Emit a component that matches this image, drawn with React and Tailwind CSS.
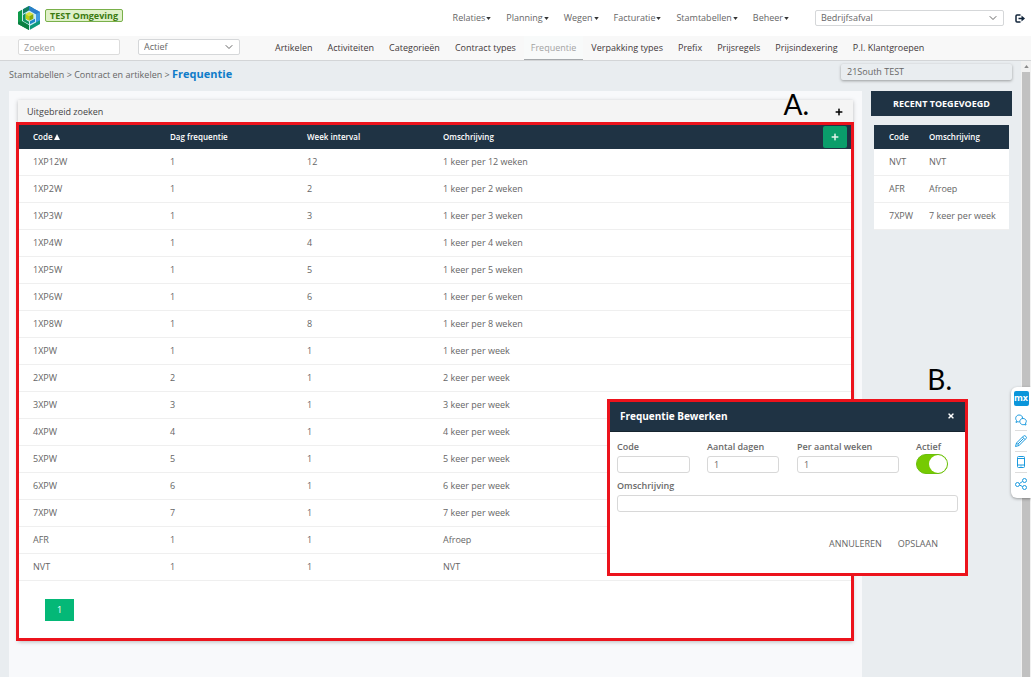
import React, { useState } from 'react';
import { ChevronDown } from 'lucide-react';
import { FaPlus, FaTimes } from 'react-icons/fa';

const mainMenu = ['Relaties', 'Planning', 'Wegen', 'Facturatie', 'Stamtabellen', 'Beheer'];

const subMenu = [
  'Artikelen',
  'Activiteiten',
  'Categorieën',
  'Contract types',
  'Frequentie',
  'Verpakking types',
  'Prefix',
  'Prijsregels',
  'Prijsindexering',
  'P.I. Klantgroepen',
];

const rows = [
  ['1XP12W', 1, 12, '1 keer per 12 weken'],
  ['1XP2W', 1, 2, '1 keer per 2 weken'],
  ['1XP3W', 1, 3, '1 keer per 3 weken'],
  ['1XP4W', 1, 4, '1 keer per 4 weken'],
  ['1XP5W', 1, 5, '1 keer per 5 weken'],
  ['1XP6W', 1, 6, '1 keer per 6 weken'],
  ['1XP8W', 1, 8, '1 keer per 8 weken'],
  ['1XPW', 1, 1, '1 keer per week'],
  ['2XPW', 2, 1, '2 keer per week'],
  ['3XPW', 3, 1, '3 keer per week'],
  ['4XPW', 4, 1, '4 keer per week'],
  ['5XPW', 5, 1, '5 keer per week'],
  ['6XPW', 6, 1, '6 keer per week'],
  ['7XPW', 7, 1, '7 keer per week'],
  ['AFR', 1, 1, 'Afroep'],
  ['NVT', 1, 1, 'NVT'],
];

const recent = [
  ['NVT', 'NVT'],
  ['AFR', 'Afroep'],
  ['7XPW', '7 keer per week'],
];

const Logo = () => (
  <svg viewBox="0 0 66 72" className="h-6 w-[22px]" aria-label="Logo">
    <path d="M33 0 L66 18 V54 L33 72 L0 54 V18 Z" fill="#c9ecf2" />
    <path d="M0 18 L12 11 V46 L33 58 V72 L0 54 Z" fill="#0e9a4a" />
    <path d="M0 48 L12 46 L33 58 V72 L0 54 Z" fill="#0b8043" />
    <path d="M15 10 L33 0 L66 18 V48 L54 55 V25 L33 13 L15 23 Z" fill="#3d9be0" />
    <path d="M15 10 L33 0 L46 7 L33 13 L15 23 Z" fill="#14805f" />
    <path d="M33 0 L66 18 L54 25 L33 13 Z" fill="#2a7fca" />
    <path d="M36 59 L66 43 V54 L36 71 Z" fill="#0c9a7c" />
    <path d="M15 27 L23 22 V41 L33 47 V55 L15 45 Z" fill="#0f9560" />
    <path d="M36 46 L51 38 V47 L36 55 Z" fill="#1c86c9" />
    <path d="M34 18 L46 24 L34 31 L23 24 Z" fill="#dbe23a" />
    <path d="M23 24 L34 31 V44 L23 38 Z" fill="#c0cf13" />
    <path d="M46 24 L34 31 V44 L46 38 Z" fill="#84ab0d" />
  </svg>
);

const Select = ({ label, options, className }) => (
  <div className={`relative ${className}`}>
    <select
      aria-label={label}
      className="block h-4 w-full appearance-none rounded-xs border border-[#d5d7d9] bg-white pl-[5px] text-[9px] leading-[14px] text-[#666]"
    >
      {options.map((o) => (
        <option key={o}>{o}</option>
      ))}
    </select>
    <ChevronDown className="pointer-events-none absolute top-0.5 right-[5px] size-3 text-[#666]" strokeWidth={2} />
  </div>
);

const Field = ({ id, label, value, className }) => (
  <div className={className}>
    <label htmlFor={id} className="block text-[9px] leading-3 font-semibold text-[#6a6a6a]">
      {label}
    </label>
    <input
      id={id}
      type="text"
      defaultValue={value}
      className="mt-[3px] block h-[17px] w-full rounded-[3px] border border-[#d8d8d8] bg-white px-1.5 text-[9px] text-[#666]"
    />
  </div>
);

const EditDialog = ({ onClose }) => {
  const [active, setActive] = useState(true);

  return (
    <div
      role="dialog"
      aria-labelledby="dialog-title"
      className="absolute top-[399px] right-[63px] w-[361px] border-3 border-[#ec131c] bg-white"
    >
      <div className="flex h-[30px] items-center justify-between border-b border-[#16242f] bg-[#1f3344] pr-2.5 pb-0.5 pl-[10px] text-white">
        <h2 id="dialog-title" className="text-[10px] font-bold">Frequentie Bewerken</h2>
        <button type="button" aria-label="Sluiten" onClick={onClose}>
          <FaTimes className="size-2" />
        </button>
      </div>

      <form className="px-[7px] pt-[9px] pb-[23px]" onSubmit={(e) => e.preventDefault()}>
        <div className="flex items-start">
          <Field id="code" label="Code" value="" className="w-[73px]" />
          <Field id="days" label="Aantal dagen" value="1" className="ml-[17px] w-[72px]" />
          <Field id="weeks" label="Per aantal weken" value="1" className="ml-[18px] w-[102px]" />
          <div className="ml-[17px]">
            <label htmlFor="active" className="block text-[9px] leading-3 font-semibold text-[#6a6a6a]">
              Actief
            </label>
            <input
              id="active"
              type="checkbox"
              checked={active}
              onChange={(e) => setActive(e.target.checked)}
              className="mt-px block h-5 w-8 appearance-none rounded-full border border-[#b5b5b5] bg-[#ddd] before:block before:size-[18px] before:rounded-full before:bg-white checked:border-[#6bbf0c] checked:bg-[#76ca02] checked:before:ml-3"
            />
          </div>
        </div>

        <Field id="description" label="Omschrijving" value="" className="mt-1.5" />

        <div className="mt-[26px] flex justify-end gap-4 pr-5 text-[9px] text-[#666]">
          <button type="button" onClick={onClose}>ANNULEREN</button>
          <button type="submit">OPSLAAN</button>
        </div>
      </form>
    </div>
  );
};

const FeedbackBar = () => (
  <div className="absolute top-[387px] right-0 flex w-5 flex-col items-center rounded-l-md bg-white pt-1 pb-1 text-[#1b9ade] shadow-[0_1px_3px_rgba(0,0,0,0.35)]">
    <button
      type="button"
      className="flex h-[15px] w-[15px] items-center justify-center rounded-xs bg-[#0a95da] pb-px text-[9px] leading-3 font-bold text-white"
    >
      mx
    </button>
    <button type="button" aria-label="Chat" className="mt-1 flex h-[21px] items-center border-b border-[#ddd]">
      <svg viewBox="0 0 24 24" className="size-3" fill="none" stroke="currentColor" strokeWidth="2">
        <path d="M9 15 C8 16 7 16 6 15 L2 17 L3 13 C-1 8 3 2 8 2 C12 2 15 4 15 8" />
        <path d="M16 9 C10 9 8 15 11 19 C13 21 16 22 18 21 L22 22 L21 18 C25 14 21 9 16 9 Z" />
      </svg>
    </button>
    <button type="button" aria-label="Bewerken" className="flex h-[21px] items-center border-b border-[#ddd]">
      <svg viewBox="0 0 24 24" className="size-3" fill="none" stroke="#1b9ade" strokeWidth="2">
        <path d="M1 23 L3 16 L17 2 Q19 0 22 3 Q24 5 22 7 L8 21 Z" />
        <path d="M15 4 L20 9 M3 16 L8 21 M6 18 L17 7" />
      </svg>
    </button>
    <button type="button" aria-label="Mobiel" className="flex h-[21px] items-center border-b border-[#ddd]">
      <svg viewBox="0 0 24 24" className="size-3" fill="none" stroke="currentColor" strokeWidth="2">
        <rect x="5" y="1" width="14" height="22" rx="2" />
        <path d="M5 5 H19 M5 18 H19 M11 20 H13" />
      </svg>
    </button>
    <button type="button" aria-label="Delen" className="flex h-[21px] items-center">
      <svg viewBox="0 0 24 24" className="size-3" fill="none" stroke="currentColor" strokeWidth="2">
        <circle cx="5" cy="13" r="4" />
        <circle cx="19" cy="5" r="4" />
        <circle cx="19" cy="19" r="4" />
        <path d="M9 11 L15 7 M9 14 L15 17" />
      </svg>
    </button>
  </div>
);

const App = () => {
  const [dialogOpen, setDialogOpen] = useState(true);

  return (
    <div className="relative flex min-h-screen flex-col bg-[#e9edf0] font-['Open_Sans',sans-serif] text-[9px] leading-3 text-[#666]">
      <header className="flex h-9 items-center bg-white pr-[6px] pl-[18px]">
        <Logo />
        <span className="mb-[5px] ml-[5px] rounded-xs border border-[#79b04a] bg-[#dff0c8] px-1 text-[9px] leading-[11px] font-bold text-[#3b7a10]">
          TEST Omgeving
        </span>
        <nav className="ml-auto flex gap-[15px]">
          {mainMenu.map((item) => (
            <a key={item} href="#" className="flex items-center gap-px">
              {item}
              <svg viewBox="0 0 6 4" className="h-[3px] w-[5px]" fill="#333">
                <path d="M0 0 H6 L3 4 Z" />
              </svg>
            </a>
          ))}
        </nav>
        <Select label="Bedrijf" options={['Bedrijfsafval']} className="mb-px ml-[26px] w-[189px]" />
        <button type="button" aria-label="Uitloggen" className="ml-[11px]">
          <svg viewBox="0 0 20 18" className="h-[9px] w-2.5" fill="none" stroke="#10243a" strokeWidth="3">
            <path d="M11 2 H4 Q2 2 2 4 V14 Q2 16 4 16 H11" />
            <path d="M7 9 H14" />
            <path d="M13 3 L20 9 L13 15 Z" fill="#10243a" stroke="none" />
          </svg>
        </button>
      </header>

      <div className="flex h-[25px] items-stretch border-b border-[#d3d5d7] bg-[#f8f8f8] pl-[18px]">
        <input
          type="text"
          aria-label="Zoeken"
          placeholder="Zoeken"
          className="mt-[3px] h-4 w-[102px] rounded-xs border border-[#dcdcdc] bg-white px-[5px] placeholder:text-[#999]"
        />
        <Select label="Status" options={['Actief', 'Inactief']} className="mt-[3px] ml-[18px] w-[102px]" />
        <nav className="ml-7 flex gap-px">
          {subMenu.map((item) =>
            item === 'Frequentie' ? (
              <a key={item} href="#" className="flex items-center border-b border-[#a5a9ac] bg-[#f8fafa] px-[7px] text-[#a3a3a3]">
                {item}
              </a>
            ) : (
              <a key={item} href="#" className="flex items-center px-[7px] text-[#43383b]">
                {item}
              </a>
            )
          )}
        </nav>
      </div>

      <div className="flex flex-1">
        <div className="flex flex-1 flex-col px-[9px]">
          <div className="flex h-[30px] items-start justify-between">
            <div className="pt-[5px] leading-4">
              <a href="#">Stamtabellen</a> &gt; <a href="#">Contract en artikelen</a> &gt;{' '}
              <span className="text-[11px] font-bold text-[#0f7cc9]">Frequentie</span>
            </div>
            <div className="mt-[3px] h-4 w-[171px] rounded-xs bg-[#e9edf0] px-1.5 leading-4 shadow-[0_1px_3px_rgba(0,0,0,0.35)]">
              21South TEST
            </div>
          </div>

          <div className="flex flex-1 items-stretch gap-[9px]">
            <main className="flex-1 bg-[#f8f9fb] p-[9px]">
              <section className="shadow-[0_1px_4px_rgba(0,0,0,0.25)]">
                <div className="relative flex h-[22px] items-center justify-between bg-[#f4f4f4] pt-0.5 pr-2.5 pl-[9px] text-[#444]">
                  <span>Uitgebreid zoeken</span>
                  <span className="absolute -top-3 right-11 font-['Lato',sans-serif] text-[28px] leading-8 text-black">
                    A.
                  </span>
                  <button type="button" aria-label="Uitklappen" className="text-black">
                    <FaPlus className="size-2" />
                  </button>
                </div>

                <div className="-mr-px -ml-0.5 border-3 border-[#ec131c] bg-white pb-[17px]">
                  <table className="w-full table-fixed border-separate border-spacing-0 text-left">
                    <colgroup>
                      <col className="w-[137px]" />
                      <col className="w-[137px]" />
                      <col className="w-[136px]" />
                      <col />
                      <col className="w-7" />
                    </colgroup>
                    <thead className="bg-[#1f3344] text-[8px] text-white">
                      <tr className="h-6">
                        <th className="p-0 pl-[14px] font-semibold">
                          <span className="flex items-center gap-px">
                            Code
                            <svg viewBox="0 0 6 6" className="size-1.5" fill="#fff">
                              <path d="M0 6 H6 L3 0 Z" />
                            </svg>
                          </span>
                        </th>
                        <th className="p-0 pl-[14px] font-semibold">Dag frequentie</th>
                        <th className="p-0 pl-[14px] font-semibold">Week interval</th>
                        <th className="p-0 pl-[14px] font-semibold">Omschrijving</th>
                        <th className="p-0">
                          <button
                            type="button"
                            aria-label="Toevoegen"
                            onClick={() => setDialogOpen(true)}
                            className="flex h-[22px] w-6 items-center justify-center rounded-xs bg-[#0a9e6b] text-[#e3f3ec]"
                          >
                            <FaPlus className="size-2" />
                          </button>
                        </th>
                      </tr>
                    </thead>
                    <tbody>
                      {rows.map((row) => (
                        <tr key={row[0]} className="h-[27px]">
                          {row.map((cell, i) => (
                            <td key={i} className="border-b border-[#efefef] p-0 pl-[14px]">{cell}</td>
                          ))}
                          <td className="border-b border-[#efefef] p-0"></td>
                        </tr>
                      ))}
                    </tbody>
                  </table>
                  <button type="button" className="mt-[18px] ml-[26px] block h-[22px] w-[29px] bg-[#04b877] text-white">
                    1
                  </button>
                </div>
              </section>
            </main>

            <aside className="w-[141px]">
              <h2 className="bg-[#1f3344] text-center text-[9px] leading-[25px] font-bold text-white">RECENT TOEGEVOEGD</h2>
              <div className="mx-[3px] mt-[9px] bg-white">
                <table className="w-full border-separate border-spacing-0 text-left">
                  <thead className="bg-[#1f3344] text-[8px] text-white">
                    <tr className="h-6">
                      <th className="w-10 p-0 pl-[15px] font-semibold">Code</th>
                      <th className="p-0 pl-[15px] font-semibold">Omschrijving</th>
                    </tr>
                  </thead>
                  <tbody>
                    {recent.map(([code, text]) => (
                      <tr key={code} className="h-[27px]">
                        <td className="border-b border-[#efefef] p-0 pl-[15px]">{code}</td>
                        <td className="border-b border-[#efefef] p-0 pl-[15px]">{text}</td>
                      </tr>
                    ))}
                  </tbody>
                </table>
              </div>
            </aside>
          </div>
        </div>

        {/* scroll track */}
        <div className="flex w-2.5 flex-col items-center bg-[#f1f1f1]">
          <svg viewBox="0 0 6 4" className="my-1 h-[3px] w-[5px]" fill="#8a8a8a">
            <path d="M0 4 H6 L3 0 Z" />
          </svg>
          <div className="w-2 flex-1 bg-[#c1c1c1]"></div>
        </div>
      </div>

      <span className="absolute top-[363px] right-[79px] font-['Lato',sans-serif] text-[28px] leading-8 text-black">
        B.
      </span>
      {dialogOpen && <EditDialog onClose={() => setDialogOpen(false)} />}
      <FeedbackBar />
    </div>
  );
};

export default App;
